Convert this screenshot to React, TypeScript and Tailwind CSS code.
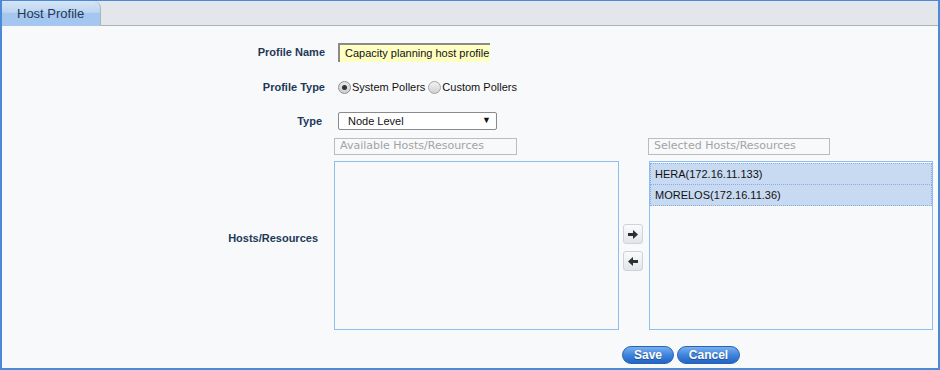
import React from "react";

const labelCls = "w-[323px] shrink-0 text-right text-[11px] font-bold text-[#1d3957]";

function ListItem({ text }: { text: string }) {
  return (
    <div className="h-[22px] border border-dotted border-[#86aee6] bg-[#c8daf2] pl-[4px] text-[11px] leading-[20px] text-[#111] -mt-px first:mt-0">
      {text}
    </div>
  );
}

function Arrow({ dir }: { dir: "right" | "left" }) {
  return (
    <div className="flex h-[20px] w-[20px] items-center justify-center rounded-[3px] border border-[#cfd3d7] bg-gradient-to-b from-[#fafbfc] to-[#e1e5ea]">
      <svg width="10" height="9" viewBox="0 0 10 9" className={dir === "left" ? "rotate-180" : ""}>
        <rect x="0" y="3" width="6" height="3" fill="#2e2e2e" />
        <polygon points="5,0 10,4.5 5,9" fill="#2e2e2e" />
      </svg>
    </div>
  );
}

export default function App() {
  return (
    <div
      className="flex h-[370px] w-[940px] flex-col border-x-2 border-b-2 border-t border-[#4a8ad6] bg-[#f8f9fb]"
      style={{ fontFamily: '"Liberation Sans", Arial, sans-serif' }}
    >
      {/* header with tab */}
      <div className="flex h-[25px] shrink-0 bg-[#e3e7eb]">
        <div className="flex h-[25px] w-[99px] items-center rounded-tr-[7px] border-r border-[#a9b4c0] bg-gradient-to-b from-[#d6e5f6] via-[#bdd5f1] via-45% to-[#a5c6ee] to-50% pl-[15px] text-[13px] text-[#1c3a58]">
          Host Profile
        </div>
        <div className="flex-1 border-b border-[#adb2b7]"></div>
      </div>

      <div className="flex flex-col">
        {/* profile name */}
        <div className="mt-[17px] flex items-center">
          <div className={labelCls}>Profile Name</div>
          <div className="ml-[13px] flex h-[19px] w-[152px] items-center border-l-2 border-t-2 border-l-[#8a8a8a] border-t-[#8a8a8a] bg-[#ffffc2] pl-[5px] text-[11px] text-[#111]">
            Capacity planning host profile
          </div>
        </div>

        {/* profile type */}
        <div className="mt-[18px] flex h-[14px] items-center">
          <div className={labelCls}>Profile Type</div>
          <div className="ml-[13px] flex items-center text-[11px] text-[#111]">
            <span className="flex h-[13px] w-[13px] items-center justify-center rounded-full border border-[#8d8d8d] bg-gradient-to-b from-[#e8e8e8] to-[#cfcfcf]">
              <span className="h-[5px] w-[5px] rounded-full bg-[#333]"></span>
            </span>
            <span className="ml-px">System Pollers</span>
            <span className="ml-[3px] h-[13px] w-[13px] rounded-full border border-[#a5a5a5] bg-gradient-to-b from-[#f2f2f2] to-[#d2d2d2]"></span>
            <span className="ml-px">Custom Pollers</span>
          </div>
        </div>

        {/* type */}
        <div className="mt-[18px] flex items-center">
          <div className={`${labelCls} pr-[3px]`}>Type</div>
          <div className="ml-[13px] flex h-[18px] w-[159px] items-center justify-between rounded-[2px] border border-[#8a8a8a] bg-white pl-[9px] pr-[5px] text-[11px] text-[#111]">
            <span>Node Level</span>
            <span className="text-[9px]">▼</span>
          </div>
        </div>

        {/* hosts */}
        <div className="mt-[8px] flex">
          <div className="w-[316px] shrink-0 pt-[94px] text-right text-[11px] font-bold leading-[12px] text-[#1d3957]">
            Hosts/Resources
          </div>
          <div className="ml-[16px] flex flex-col">
            <div
              className="flex h-[17px] w-[183px] items-center border border-[#bcbcbc] bg-[#f8f9fb] pl-[5px] text-[11px] text-[#a3a3a3]"
              style={{ fontFamily: '"DejaVu Sans", Verdana, sans-serif' }}
            >
              Available Hosts/Resources
            </div>
            <div className="mt-[6px] h-[169px] w-[285px] border border-[#90bdf0] bg-[#f8f9fb]"></div>
          </div>
          <div className="ml-[4px] flex flex-col gap-[7px] pt-[86px]">
            <Arrow dir="right" />
            <Arrow dir="left" />
          </div>
          <div className="ml-[5px] flex flex-col">
            <div
              className="flex h-[17px] w-[182px] items-center border border-[#bcbcbc] bg-[#f8f9fb] pl-[5px] text-[11px] text-[#a3a3a3]"
              style={{ fontFamily: '"DejaVu Sans", Verdana, sans-serif' }}
            >
              Selected Hosts/Resources
            </div>
            <div className="ml-px mt-[6px] h-[169px] w-[284px] border border-[#90bdf0] bg-[#f8f9fb] pt-px">
              <ListItem text="HERA(172.16.11.133)" />
              <ListItem text="MORELOS(172.16.11.36)" />
            </div>
          </div>
        </div>

        {/* buttons */}
        <div className="ml-[620px] mt-[16px] flex gap-[3px]">
          <div className="flex h-[18px] w-[52px] items-center justify-center rounded-full border border-[#2c62b0] bg-gradient-to-b from-[#78b0f0] via-[#3f84dc] to-[#2166c8] text-[12px] font-bold text-white [text-shadow:0_1px_1px_rgba(0,0,0,0.35)]">
            Save
          </div>
          <div className="flex h-[18px] w-[63px] items-center justify-center rounded-full border border-[#2c62b0] bg-gradient-to-b from-[#78b0f0] via-[#3f84dc] to-[#2166c8] text-[12px] font-bold text-white [text-shadow:0_1px_1px_rgba(0,0,0,0.35)]">
            Cancel
          </div>
        </div>
      </div>
    </div>
  );
}
